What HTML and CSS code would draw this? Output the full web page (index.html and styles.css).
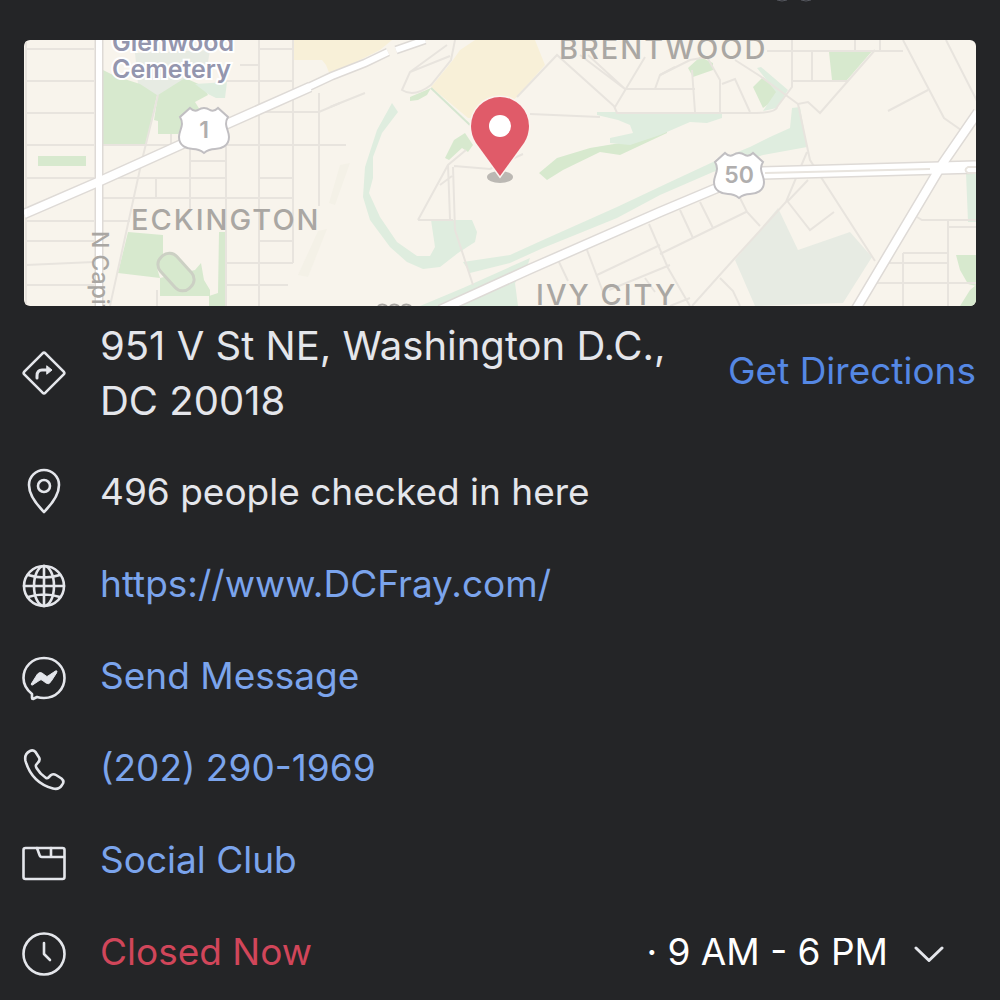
FILE: index.html
```html
<!DOCTYPE html>
<html lang="en">
<head>
  <meta charset="UTF-8" />
  <meta name="viewport" content="width=device-width, initial-scale=1" />
  <title>DC Fray - About</title>
  <link rel="stylesheet" href="styles.css">
</head>
<body>
  <header class="topbar">
    <svg class="topbar-edge" viewBox="0 0 40 4" aria-hidden="true">
      <path d="M3 0q5 2 10 0M27 0q5 2 10 0" />
    </svg>
  </header>

  <main>
    <svg class="map" viewBox="24 40 952 266" role="img" aria-label="Map of 951 V St NE">
      <rect class="land" x="24" y="40" width="952" height="266" />

      <!-- areas -->
      <g class="yellow">
        <path d="M293 40H392L380 50 330 75 326 65 322 60H293z" />
        <path d="M475 40H535L545 65 517 97 490 118H468L431 87 453 60 460 50z" />
      </g>
      <path class="slate" d="M135 53 210 50 208 62 180 85 158 96 138 84zM778 208 798 250 850 232 872 257 843 303 755 306 735 260z" />
      <g class="green">
        <path d="M103 70 115 76 140 84 157 95 146 144H103z" />
        <path d="M158 95 185 78 203 86 208 95 195 102 200 110 178 134H158V121L154 120z" />
        <path d="M38 156H86V166H38z" />
        <path d="M128 232 163 235V260L157 268 160 278 118 273z" />
        <path d="M160 278 195 270 201 263 204 280 210 290V306H209V296H160z" />
        <path d="M219 232H227V306H209V296L218 293z" />
        <path d="M410 97 431 88 427 95 418 100 410 101zM445 158 454 140 465 133 473 145 468 152 462 148 449 160z" />
        <path d="M539 173 557 158 590 148 620 143 667 130V133L620 155 600 152 563 170 547 180z" />
        <path d="M688 68 700 57 713 63V70L693 77zM753 87 763 77 778 90 774 100 763 108zM829 52 873 50 847 80H832z" />
        <path d="M956 255H976V286L968 284 960 270zM970 290 976 285V306H960z" />
      </g>
      <g class="teal">
        <path d="M195 84 227 82 225 98 216 98 208 94z" />
        <path d="M392 103 398 112 382 133 373 157 373 178 369 193 380 217 397 242 417 256 430 256 435 247 431 220H472L477 232 475 242 458 253 440 267 423 269 407 262 390 247 370 220 363 197 365 167 377 130z" />
        <path d="M597 112H722V118L707 123 690 122 660 135 630 145 610 143V138L633 133 630 125 618 120 597 115z" />
        <path d="M463 262 510 255 543 240 617 207 670 182 713 162 750 147 770 137 790 128 792 108 800 107 807 147 763 155 713 172 660 195 617 218 543 248 510 263 470 273z" />
        <path d="M530 258 528 264 515 283 518 306H420L463 288z" />
        <path d="M757 68 761 67 788 90 777 108 763 111 776 92zM966 173H976V222H968z" />
      </g>
      <path class="green-line" d="M431 88 470 125" />
      <path class="sand" d="M318 231 327 229 308 277 298 275zM340 165 350 163 335 205 329 203z" />

      <!-- minor streets -->
      <g class="street">
        <path d="M26 40V306M190 134V210M226 140V306M259 40V306M293 40V263M319 93V206M156 178V198M171 134V145M157 290V306" />
        <path d="M26 49H94M26 81H94M26 113H94M26 145H94M26 178H94M26 221H94M26 241H94M26 265 94 262M26 285H94" />
        <path d="M259 49H293M240 65H259M226 81H293M259 112H319L340 103M103 145H340M190 161H226M103 178H226M259 178H293M103 198H293M103 221H130M259 241H293M226 263H293M226 285H288" />
        <path d="M158 95 142 160 110 306M330 107 365 93M330 145H346" />
        <path d="M455 40 451 60 431 85Q414 98 402 90L410 72 450 56M410 72 447 45" />
        <path d="M418 220 448 165 466 150M418 220H453M448 165 450 219M453 167 455 230 473 285M454 166 490 169 523 154M440 185 452 176" />
        <path d="M517 97 557 55 615 107M530 114 600 117M580 55 625 89H695M615 107 645 57M614 106 617 113H757Q777 112 777 107M655 89 660 75 675 67M588 55 625 89" />
        <path d="M660 75 690 60 707 57 720 80V112M692 70 695 112M722 84 735 79 750 112M735 60 760 76 798 104 808 102 820 113 875 50M767 51H903M792 40V87L777 107M812 51V81M792 81H848M855 40V51M880 40V51" />
        <path d="M903 40 944 118 961 130M946 40 977 101M928 90 888 111M798 104 810 160 875 261M807 152 796 178 786 202 735 258 692 306M788 202 810 230 834 212M808 180 787 202M740 198 747 212 760 226M660 254 746 212M680 210 693 238M700 202 713 228" />
        <path d="M559 262 568 281M587 250 603 292M597 275 660 245M649 224 668 268 690 306M609 290 670 265M645 278 655 292M720 278 733 291 740 306M670 306 690 298" />
        <path d="M917 217 922 220H976M948 220V306M948 227H976M903 253H948M903 253V306M885 263H948M876 283H976" />
      </g>

      <!-- main roads -->
      <g class="casing">
        <path class="wide" d="M24 214 98 182 220 127 310 87" />
        <path class="medium" d="M300 91 332 76 365 63 388 52M396 50 425 40" />
        <path class="medium" d="M99 40V306" />
        <path class="wide" d="M440 310 530 269 660 212 717 188" />
        <path class="wider" d="M760 173 976 167" />
        <path class="wide" d="M856 309 943 163 978 112" />
      </g>
      <g class="road">
        <path class="wide" d="M24 214 98 182 220 127 310 87" />
        <path class="medium" d="M300 91 332 76 365 63 388 52M396 50 425 40" />
        <path class="medium" d="M99 40V306" />
        <path class="wide" d="M440 310 530 269 660 212 717 188" />
        <path class="wider" d="M760 173 976 167" />
        <path class="wide" d="M856 309 943 163 978 112" />
      </g>
      <path class="street" d="M765 173 930 169M976 167H968q-5 3 0 6h8" />
      <rect class="track" x="-11" y="-21" width="22" height="42" rx="10" transform="translate(176 272) rotate(-42)" />

      <!-- route shields -->
      <g transform="translate(204 130)">
        <path class="shield" d="M-14-22Q-10-18-6-20 0-24 6-20 10-18 14-22L24-13C19-5 25 0 25 7 25 16 17 19 11 19Q5 19 0 23-5 19-11 19C-17 19-25 16-25 7-25 0-19-5-24-13z" />
        <text class="route" y="8">1</text>
      </g>
      <g transform="translate(739 175)">
        <path class="shield" d="M-14-22Q-10-18-6-20 0-24 6-20 10-18 14-22L24-13C19-5 25 0 25 7 25 16 17 19 11 19Q5 19 0 23-5 19-11 19C-17 19-25 16-25 7-25 0-19-5-24-13z" />
        <text class="route" y="8">50</text>
      </g>

      <!-- labels -->
      <text class="place" x="112" y="51">Glenwood</text>
      <text class="place" x="112" y="78">Cemetery</text>
      <text class="area" x="131" y="230">ECKINGTON</text>
      <text class="area" x="559" y="59">BRENTWOOD</text>
      <text class="area" x="536" y="305">IVY CITY</text>
      <text class="road-name" transform="translate(92 231) rotate(90)">N Capitol St</text>
      <path class="label-edge" d="M378 306q4-3 9 0M390 306q4-3 9 0M402 306q4-3 9 0" />

      <!-- pin -->
      <ellipse class="pin-shadow" cx="500" cy="177" rx="13" ry="6" />
      <path class="pin" d="M500 176 476 143Q471 135 471 126A29 29 0 0 1 529 126Q529 135 524 143z" />
      <circle class="pin-hole" cx="500" cy="126" r="11" />
    </svg>

    <ul class="info">
      <li class="row address">
        <svg class="icon" viewBox="0 0 44 44" aria-hidden="true">
          <path d="M20.600 2.300Q22 1 23.400 2.300L41.700 20.600Q43 22 41.700 23.400L23.400 41.700Q22 43 20.600 41.700L2.300 23.400Q1 22 2.300 20.600z" />
          <path class="bold" d="M15 27V25Q15 19 20 19H26" />
          <path class="solid" d="M25 15 30 19 25 23z" />
        </svg>
        <span class="text">951 V St NE, Washington D.C., DC 20018</span>
        <a class="directions" href="#directions">Get Directions</a>
      </li>
      <li class="row">
        <svg class="icon" viewBox="0 4 44 44" aria-hidden="true">
          <path d="M22 44C16 38 7 28 7 17A15 15 0 0 1 37 17C37 28 28 38 22 44z" />
          <circle cx="22" cy="18" r="6" />
        </svg>
        <span class="text">496 people checked in here</span>
      </li>
      <li class="row">
        <svg class="icon" viewBox="0 0 44 44" aria-hidden="true">
          <circle cx="22" cy="22" r="20" />
          <ellipse cx="22" cy="22" rx="10" ry="20" />
          <path d="M22 2V42M2 22H42M6 11Q22 16 38 11M6 33Q22 28 38 33" />
        </svg>
        <a class="text" href="https://www.DCFray.com/">https://www.DCFray.com/</a>
      </li>
      <li class="row">
        <svg class="icon" viewBox="0 0 44 44" aria-hidden="true">
          <path d="M22 2C34 2 42.500 11 42.500 22S34 42 22 42Q18 42 15 41L11 43Q10 43 10 42V38C5 34 1.500 29 1.500 22 1.500 11 10 2 22 2z" />
          <path class="solid" d="M9.500 27.500 15.500 18Q17.500 15.500 20 17L24 20Q25 21 26 20L33.500 15Q36 14 34.500 17L29 25.500Q27 29 24 27L20 24Q19 23.500 18 24L10.500 29Q8.500 29.500 9.500 27.500z" />
        </svg>
        <a class="text" href="#message">Send Message</a>
      </li>
      <li class="row">
        <svg class="icon" viewBox="0 0 44 44" aria-hidden="true">
          <path d="M8 3Q11 1.500 13.500 4L17 9.500Q18.500 12 16 14.500L14 17Q13.500 18 14.500 20 18 26 24 30 25.500 30.500 26.500 29.500L29 27Q31.500 25.500 34 27L39.500 30.500Q43 33.500 40 37 37 42 31 40.500 10 35 3.500 13 2 6 8 3z" />
        </svg>
        <a class="text" href="tel:+12022901969">(202) 290-1969</a>
      </li>
      <li class="row">
        <svg class="icon" viewBox="0 0 44 44" aria-hidden="true">
          <rect x="1.500" y="8" width="41" height="31" rx="2" />
          <path d="M15 8 17.500 15Q18 17 20 17H42M29 8V17" />
        </svg>
        <a class="text" href="#category">Social Club</a>
      </li>
      <li class="row">
        <svg class="icon" viewBox="0 0 44 44" aria-hidden="true">
          <circle cx="22" cy="22" r="20.500" />
          <path d="M22 11V22L28 28" />
        </svg>
        <span class="text closed">Closed Now</span>
        <button class="hours" type="button" aria-expanded="false">
          <span class="hours-text">· 9 AM - 6 PM</span>
          <svg class="chevron" viewBox="0 0 30 18" aria-hidden="true">
            <path d="M2 3 15 15.500 28 3" />
          </svg>
        </button>
      </li>
    </ul>
  </main>
</body>
</html>
```

FILE: styles.css
```css
* {
  box-sizing: border-box;
}
body {
  margin: 0;
  background: #242527;
  color: #e4e6eb;
  font-family: Inter, "Liberation Sans", sans-serif;
  font-size: 37px;
}
a {
  color: #7ba4ec;
  text-decoration: none;
}

.topbar {
  display: flex;
  justify-content: flex-end;
  height: 40px;
  padding-right: 186px;
}
.topbar-edge {
  width: 40px;
  height: 4px;
  fill: none;
  stroke: #55585f;
}

/* map */
main {
  padding: 0 24px 0 22px;
}
.map {
  display: block;
  width: calc(100% - 2px);
  margin-left: 2px;
  border-radius: 6px;
}
.map path {
  fill: none;
}
.land {
  fill: #f8f4ec;
}
.map .yellow path {
  fill: #f8f0d8;
}
.map .green path {
  fill: #d7e9ce;
}
.map .teal path {
  fill: #dfeddf;
}
.map .slate {
  fill: #e7ebe3;
}
.map .sand {
  fill: #f4f1e7;
}
.green-line {
  stroke: #d5e6d0;
  stroke-width: 2;
}
.street {
  stroke: #e8e4de;
  stroke-width: 2;
}
.casing {
  stroke: #dedad6;
}
.road {
  stroke: #fff;
}
.casing .medium {
  stroke-width: 9;
}
.casing .wide {
  stroke-width: 11;
}
.casing .wider {
  stroke-width: 14;
}
.road .medium {
  stroke-width: 6;
}
.road .wide {
  stroke-width: 8;
}
.road .wider {
  stroke-width: 11;
}
.track {
  fill: #d7e9ce;
  stroke: #ccd0c4;
  stroke-width: 3;
}
.map .shield {
  fill: #fff;
  stroke: #c1bfc2;
  stroke-width: 2;
}
.route {
  fill: #b0aeae;
  font-size: 23px;
  font-weight: 600;
  text-anchor: middle;
}
.place {
  fill: #9496ae;
  stroke: #fff;
  stroke-width: 4;
  paint-order: stroke;
  font-size: 25px;
  font-weight: 600;
}
.area {
  fill: #aaa7a3;
  font-size: 29px;
  font-weight: 500;
  letter-spacing: 2px;
}
.road-name {
  fill: #aaa7a3;
  font-size: 23px;
  font-weight: 500;
}
.label-edge {
  stroke: #aaa7a3;
  stroke-width: 2;
}
.pin-shadow {
  fill: #bbb8b3;
}
.map .pin {
  fill: #e05b69;
  stroke: #fbf3ee;
  stroke-width: 3;
  paint-order: stroke;
}
.pin-hole {
  fill: #fff;
}

/* info rows */
.info {
  list-style: none;
  margin: 0;
  padding: 0;
}
.row {
  display: flex;
  align-items: center;
  gap: 34px;
  height: 92px;
}
.text,
.directions,
.hours-text {
  padding-bottom: 6px;
}
.text {
  flex: 1;
}
.address {
  height: auto;
  padding: 12px 0 20px;
}
.address .text {
  padding-bottom: 0;
  font-size: 40px;
  line-height: 55px;
}
.directions {
  color: #5588e4;
}
.closed {
  color: #d1465a;
}
.icon {
  flex: none;
  width: 44px;
  height: 44px;
  overflow: visible;
}
.icon path,
.icon circle,
.icon ellipse,
.icon rect {
  fill: none;
  stroke: #e4e6eb;
  stroke-width: 2.6;
  stroke-linecap: round;
  stroke-linejoin: round;
}
.icon .bold {
  stroke-width: 3;
}
.icon .solid {
  fill: #e4e6eb;
  stroke-width: 1;
}
.hours {
  display: flex;
  align-items: center;
  gap: 26px;
  padding: 0 32px 0 0;
  border: none;
  background: none;
  color: #fff;
  font: inherit;
  cursor: pointer;
}
.chevron {
  width: 30px;
  height: 18px;
  fill: none;
  stroke: #e4e6eb;
  stroke-width: 3;
  stroke-linecap: round;
  stroke-linejoin: round;
}
```
